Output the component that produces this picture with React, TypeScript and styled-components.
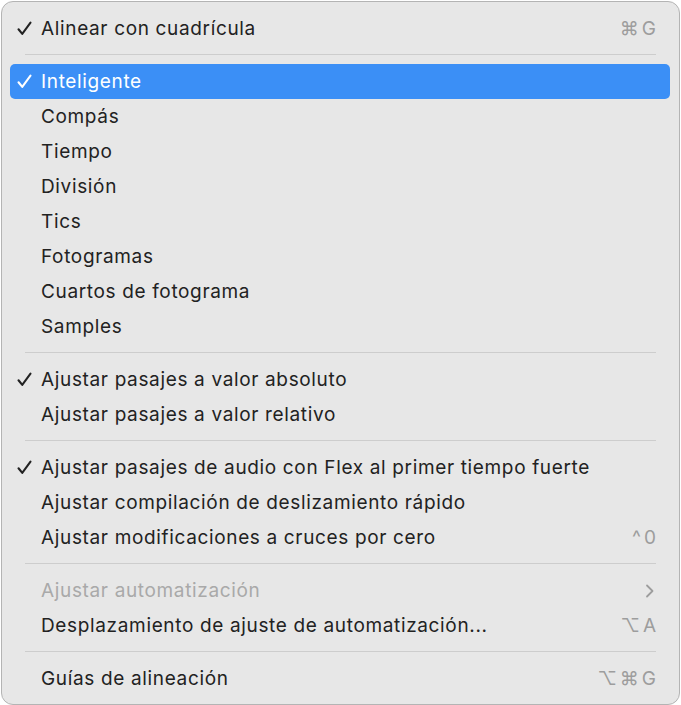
import styled, { createGlobalStyle } from "styled-components";

interface Item {
  label?: string;
  checked?: boolean;
  selected?: boolean;
  disabled?: boolean;
  shortcut?: string;
  submenu?: boolean;
  separator?: boolean;
}

const items: Item[] = [
  { label: "Alinear con cuadrícula", checked: true, shortcut: "⌘G" },
  { separator: true },
  { label: "Inteligente", checked: true, selected: true },
  { label: "Compás" },
  { label: "Tiempo" },
  { label: "División" },
  { label: "Tics" },
  { label: "Fotogramas" },
  { label: "Cuartos de fotograma" },
  { label: "Samples" },
  { separator: true },
  { label: "Ajustar pasajes a valor absoluto", checked: true },
  { label: "Ajustar pasajes a valor relativo" },
  { separator: true },
  { label: "Ajustar pasajes de audio con Flex al primer tiempo fuerte", checked: true },
  { label: "Ajustar compilación de deslizamiento rápido" },
  { label: "Ajustar modificaciones a cruces por cero", shortcut: "^0" },
  { separator: true },
  { label: "Ajustar automatización", disabled: true, submenu: true },
  { label: "Desplazamiento de ajuste de automatización...", shortcut: "⌥A" },
  { separator: true },
  { label: "Guías de alineación", shortcut: "⌥⌘G" },
];

function App() {
  return (
    <>
      <GlobalStyle />
      <Menu>
        {items.map((item, i) =>
          item.separator ? (
            <Separator key={i} />
          ) : (
            <Row key={i} $selected={item.selected} $disabled={item.disabled}>
              <CheckSlot>
                {item.checked && (
                  <CheckIcon viewBox="0 0 16 16">
                    <path
                      d="M1.6 8.8 L5.6 13.8 L14.4 1.8"
                      fill="none"
                      stroke="currentColor"
                      strokeWidth="2.2"
                      strokeLinecap="round"
                      strokeLinejoin="round"
                    />
                  </CheckIcon>
                )}
              </CheckSlot>
              <Label>{item.label}</Label>
              {item.shortcut && (
                <Shortcut $selected={item.selected}>{item.shortcut}</Shortcut>
              )}
              {item.submenu && (
                <Chevron viewBox="0 0 10 16">
                  <path
                    d="M2 2.5 L7.5 8 L2 13.5"
                    fill="none"
                    stroke="currentColor"
                    strokeWidth="1.8"
                    strokeLinecap="round"
                    strokeLinejoin="round"
                  />
                </Chevron>
              )}
            </Row>
          )
        )}
      </Menu>
    </>
  );
}

const GlobalStyle = createGlobalStyle`
  html, body {
    margin: 0;
    padding: 0;
    background: #ffffff;
  }
  body {
    font-family: Inter, "Noto Sans", sans-serif;
  }
`;

const Menu = styled.div`
  box-sizing: border-box;
  width: 679px;
  margin: 1px 0 0 1px;
  padding: 9px 9px 8px 8px;
  background: #e7e7e7;
  border: 1px solid #b4b4b4;
  border-radius: 12px;
  display: flex;
  flex-direction: column;
`;

const Row = styled.div<{ $selected?: boolean; $disabled?: boolean }>`
  height: 35px;
  display: flex;
  align-items: center;
  padding: 0 14px 0 7px;
  border-radius: 5px;
  font-size: 19px;
  letter-spacing: 0.65px;
  background: ${(p) => (p.$selected ? "#3b8ff6" : "transparent")};
  color: ${(p) =>
    p.$selected ? "#ffffff" : p.$disabled ? "#a9a9a9" : "#222222"};
`;

const CheckSlot = styled.span`
  width: 24px;
  flex: none;
  display: flex;
  align-items: center;
`;

const CheckIcon = styled.svg`
  width: 15px;
  height: 15px;
  margin-top: -1px;
`;

const Label = styled.span`
  flex: 1;
  white-space: nowrap;
`;

const Shortcut = styled.span<{ $selected?: boolean }>`
  color: ${(p) => (p.$selected ? "#ffffff" : "#9d9d9d")};
  letter-spacing: 3px;
  margin-right: -3px;
`;

const Chevron = styled.svg`
  width: 10px;
  height: 16px;
  color: #9d9d9d;
  margin-right: 1px;
`;

const Separator = styled.div`
  height: 1px;
  background: #cdcdcd;
  margin: 8px 14px 9px 15px;
`;

export default App;
